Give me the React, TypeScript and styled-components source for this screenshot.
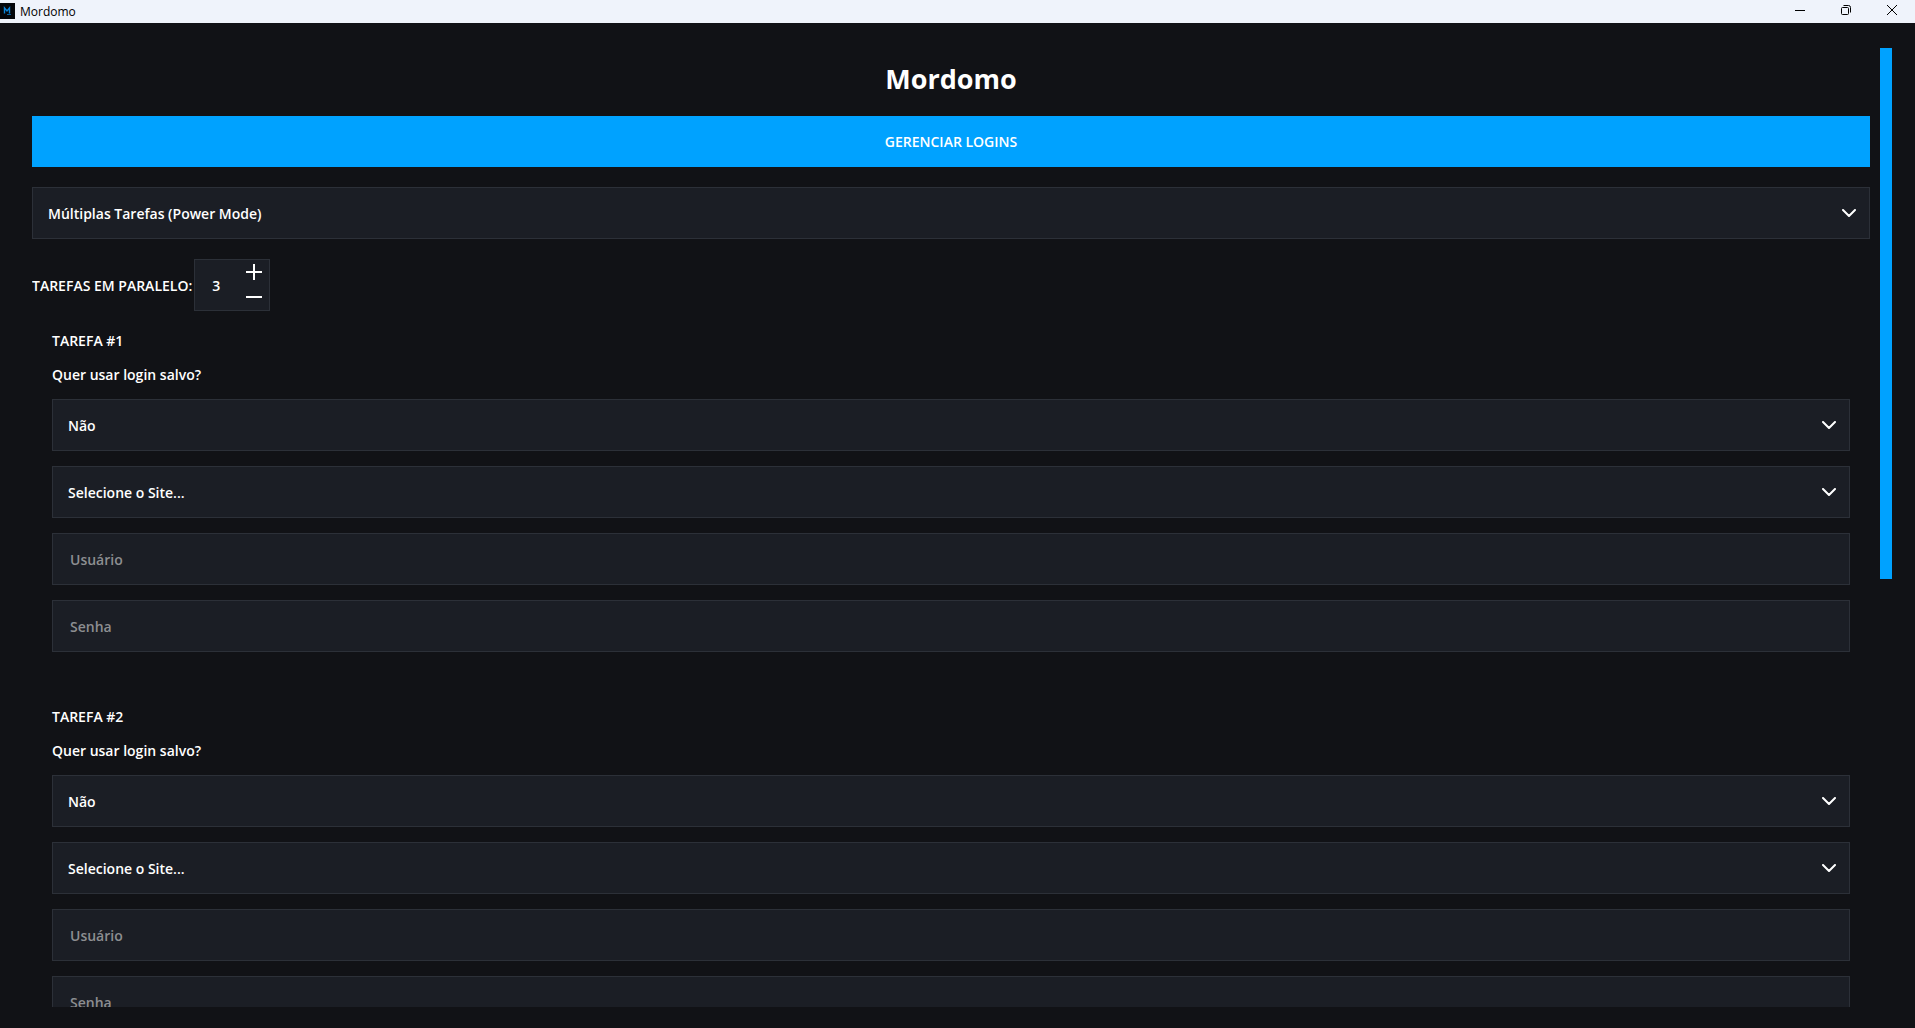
import React, { useEffect, useRef, useState } from "react";
import styled, { createGlobalStyle } from "styled-components";

const font = '"Open Sans", "Noto Sans", sans-serif';

const GlobalStyle = createGlobalStyle`
  *, *::before, *::after { box-sizing: border-box; }
  body {
    margin: 0;
    background: #111216;
    color: #ffffff;
    font: 600 14px/19px ${font};
  }
  button, input, select { font: inherit; color: inherit; margin: 0; border-radius: 0; }
`;

const Window = styled.div`
  display: flex;
  flex-direction: column;
  height: 100vh;
  overflow: hidden;
`;

const TitleBar = styled.header`
  display: flex;
  align-items: center;
  flex: none;
  height: 23px;
  background: #eff3fb;
  color: #000000;
`;

const WindowTitle = styled.span`
  flex: 1;
  margin-left: 5px;
  font: 400 12px/17px ${font};
`;

const WindowButton = styled.button`
  display: grid;
  place-items: center;
  align-self: flex-start;
  width: 46px;
  height: 20px;
  padding: 0;
  border: 0;
  background: transparent;
`;

const Body = styled.main`
  display: flex;
  flex: 1;
  gap: 10px;
  min-height: 0;
  padding: 25px 23px 21px 32px;
`;

const Scroller = styled.div`
  flex: 1;
  min-width: 0;
  overflow-y: auto;
  scrollbar-width: none;
`;

const Content = styled.div`
  display: flex;
  flex-direction: column;
  gap: 20px;
  padding: 14px 0 376px;
`;

const Rail = styled.div`
  flex: none;
  width: 12px;
`;

const Thumb = styled.div`
  background: #00a2ff;
`;

const Heading = styled.h1`
  margin: 0;
  font-size: 27px;
  font-weight: 700;
  line-height: 34px;
  text-align: center;
`;

const PrimaryButton = styled.button`
  height: 51px;
  border: 0;
  background: #00a2ff;
  text-transform: uppercase;
`;

const SelectBox = styled.div`
  display: grid;
  align-items: center;

  & > * { grid-area: 1 / 1; }
  & > svg { justify-self: end; margin-right: 14px; pointer-events: none; }
`;

const Select = styled.select`
  width: 100%;
  height: 52px;
  padding: 1px 40px 0 15px;
  border: 1px solid #2c3038;
  background: #1b1e25;
  appearance: none;
`;

const TextInput = styled.input`
  width: 100%;
  height: 52px;
  padding: 1px 17px 0;
  border: 1px solid #2c3038;
  background: #1b1e25;

  &::placeholder { color: #8d8e91; opacity: 1; }
`;

const CountRow = styled.div`
  display: flex;
  align-items: center;
  gap: 2px;
`;

const Spinner = styled.div`
  display: flex;
  width: 76px;
  height: 52px;
  padding-right: 7px;
  border: 1px solid #2c3038;
  background: #1b1e25;
`;

const CountInput = styled.input`
  flex: 1;
  min-width: 0;
  padding: 0 0 0 17px;
  border: 0;
  background: transparent;
`;

const Steps = styled.div`
  display: grid;
  grid-template-rows: 24px 26px;
`;

const StepButton = styled.button`
  display: grid;
  place-items: center;
  width: 16px;
  padding: 0;
  border: 0;
  background: transparent;
`;

const TaskList = styled.div`
  display: flex;
  flex-direction: column;
  gap: 55px;
  padding: 0 20px;
`;

const Task = styled.section`
  display: flex;
  flex-direction: column;
  gap: 15px;
`;

const TaskTitle = styled.h2`
  margin: 0;
  font: inherit;
`;

const IconSvg = styled.svg`
  align-self: flex-start;
  margin-top: 3px;
`;

const AppIcon = () => (
  <IconSvg width="15" height="16" viewBox="0 0 15 16" aria-hidden="true">
    <rect width="15" height="16" fill="#05070b" />
    <path d="M4.5 10.5V5L7 8L9.5 5V10.5" fill="none" stroke="#0b84d8" strokeWidth="1.4" />
    <path d="M7 11.5H11" stroke="#0b5f9c" />
  </IconSvg>
);

const Chevron = () => (
  <svg width="14" height="8" viewBox="0 0 14 8" aria-hidden="true">
    <path d="M1 1L7 7L13 1" fill="none" stroke="#ffffff" strokeWidth="2" strokeLinecap="round" strokeLinejoin="round" />
  </svg>
);

type DropdownProps = { id?: string; label?: string; options: string[] };

const Dropdown = ({ id, label, options }: DropdownProps) => (
  <SelectBox>
    <Select id={id} aria-label={label}>
      {options.map((option) => (
        <option key={option}>{option}</option>
      ))}
    </Select>
    <Chevron />
  </SelectBox>
);

const TaskForm = ({ number }: { number: number }) => (
  <Task>
    <TaskTitle>TAREFA #{number}</TaskTitle>
    <label htmlFor={`saved-${number}`}>Quer usar login salvo?</label>
    <Dropdown id={`saved-${number}`} options={["Não"]} />
    <Dropdown label="Site" options={["Selecione o Site..."]} />
    <TextInput type="text" placeholder="Usuário" aria-label="Usuário" />
    <TextInput type="password" placeholder="Senha" aria-label="Senha" />
  </Task>
);

export default function App() {
  const [count, setCount] = useState(3);
  const [thumb, setThumb] = useState({ offset: 0, size: 0 });
  const scroller = useRef<HTMLDivElement>(null);

  const measure = () => {
    const el = scroller.current;
    if (!el) return;
    setThumb({
      offset: (el.scrollTop / el.clientHeight) * 100,
      size: (el.clientHeight / el.scrollHeight) * 100,
    });
  };

  useEffect(() => {
    measure();
    window.addEventListener("resize", measure);
    return () => window.removeEventListener("resize", measure);
  }, [count]);

  return (
    <Window>
      <GlobalStyle />
      <TitleBar>
        <AppIcon />
        <WindowTitle>Mordomo</WindowTitle>
        <WindowButton aria-label="Minimizar">
          <svg width="10" height="10" viewBox="0 0 10 10">
            <path d="M0 5.5H10" stroke="#000000" />
          </svg>
        </WindowButton>
        <WindowButton aria-label="Restaurar">
          <svg width="10" height="10" viewBox="0 0 10 10" fill="none" stroke="#000000">
            <rect x="0.5" y="2.5" width="7" height="7" rx="1" />
            <path d="M2.5 0.5H7.5A2 2 0 0 1 9.5 2.5V7.5" />
          </svg>
        </WindowButton>
        <WindowButton aria-label="Fechar">
          <svg width="10" height="10" viewBox="0 0 10 10">
            <path d="M0 0L10 10M10 0L0 10" stroke="#000000" />
          </svg>
        </WindowButton>
      </TitleBar>
      <Body>
        <Scroller ref={scroller} onScroll={measure}>
          <Content>
            <Heading>Mordomo</Heading>
            <PrimaryButton>Gerenciar Logins</PrimaryButton>
            <Dropdown label="Modo" options={["Múltiplas Tarefas (Power Mode)"]} />
            <CountRow>
              <label htmlFor="count">TAREFAS EM PARALELO:</label>
              <Spinner>
                <CountInput id="count" type="text" inputMode="numeric" readOnly value={count} />
                <Steps>
                  <StepButton aria-label="Aumentar" onClick={() => setCount(count + 1)}>
                    <svg width="16" height="16" viewBox="0 0 16 16">
                      <path d="M0 8H16M8 0V16" stroke="#ffffff" strokeWidth="2" />
                    </svg>
                  </StepButton>
                  <StepButton aria-label="Diminuir" onClick={() => setCount(Math.max(1, count - 1))}>
                    <svg width="16" height="16" viewBox="0 0 16 16">
                      <path d="M0 8H16" stroke="#ffffff" strokeWidth="2" />
                    </svg>
                  </StepButton>
                </Steps>
              </Spinner>
            </CountRow>
            <TaskList>
              {Array.from({ length: count }, (_, index) => (
                <TaskForm key={index} number={index + 1} />
              ))}
            </TaskList>
          </Content>
        </Scroller>
        <Rail>
          <Thumb style={{ height: `${thumb.size}%`, transform: `translateY(${thumb.offset}%)` }} />
        </Rail>
      </Body>
    </Window>
  );
}
